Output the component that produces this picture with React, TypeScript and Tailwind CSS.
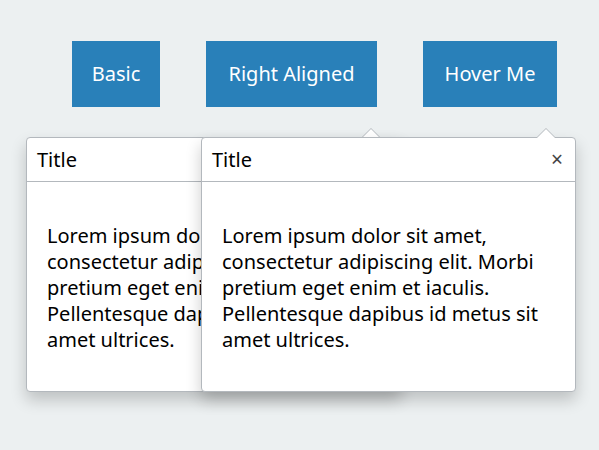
import React from "react";

const BUTTONS = [
  { label: "Basic", w: "w-[88px]" },
  { label: "Right Aligned", w: "w-[171px]" },
  { label: "Hover Me", w: "w-[134px]" },
];

const LINES = [
  "Lorem ipsum dolor sit amet,",
  "consectetur adipiscing elit. Morbi",
  "pretium eget enim et iaculis.",
  "Pellentesque dapibus id metus sit",
  "amet ultrices.",
];

function Popover({ className }: { className: string }) {
  return (
    <div
      className={`absolute top-[137px] w-[375px] h-[255px] bg-white border border-[#b3b8bd] rounded-[4px] shadow-[0_8px_16px_rgba(0,0,0,0.2)] ${className}`}
    >
      {/* arrow */}
      <div className="absolute -top-[10px] right-[19px] w-0 h-0 border-x-[10px] border-x-transparent border-b-[10px] border-b-[#b3b8bd]" />
      <div className="absolute -top-[9px] right-[20px] w-0 h-0 border-x-[9px] border-x-transparent border-b-[9px] border-b-white" />

      <div className="h-[44px] flex items-center justify-between pl-[10px] pr-[12px] border-b border-[#b3b8bd]">
        <span className="text-[20px] text-black">Title</span>
        <span className="text-[21px] text-[#444] leading-none">×</span>
      </div>
      <div className="px-[20px] pt-[41px] text-[20px] leading-[26px] text-black">
        {LINES.map((l) => (
          <div key={l} className="whitespace-nowrap">{l}</div>
        ))}
      </div>
    </div>
  );
}

export default function App() {
  return (
    <div
      className="relative w-[599px] h-[450px] bg-[#ecf0f1] overflow-hidden"
      style={{ fontFamily: "'Noto Sans', 'Open Sans', sans-serif" }}
    >
      <div className="flex gap-[46px] pl-[72px] pt-[41px]">
        {BUTTONS.map((b) => (
          <button
            key={b.label}
            className={`${b.w} h-[66px] bg-[#2980b9] text-white text-[20px]`}
          >
            {b.label}
          </button>
        ))}
      </div>

      <Popover className="left-[26px]" />
      <Popover className="left-[201px]" />
    </div>
  );
}
